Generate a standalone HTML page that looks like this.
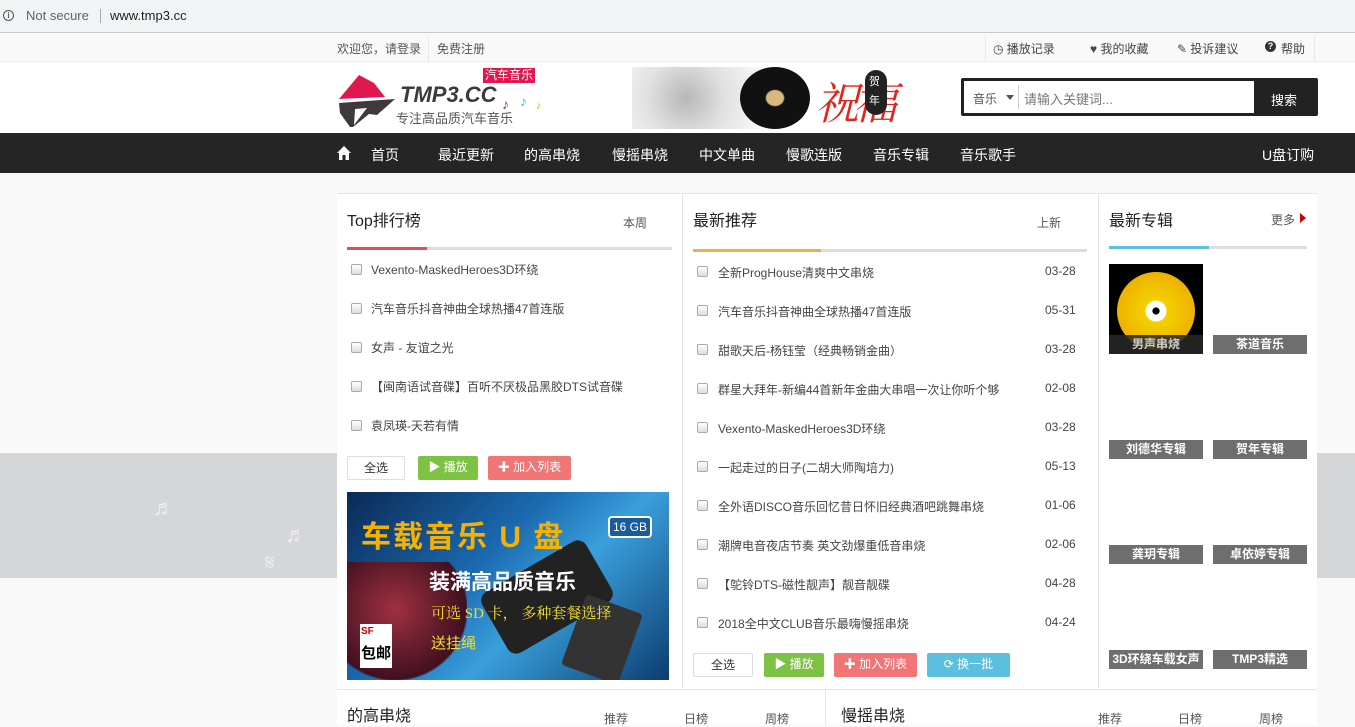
<!DOCTYPE html>
<html><head><meta charset="utf-8"><style>
*{margin:0;padding:0;box-sizing:border-box}
body{width:1355px;height:725px;overflow:hidden;background:#f9f9f9;font-family:"Liberation Sans","Noto Sans CJK SC",sans-serif;font-size:12px;color:#333;position:relative}
.a{position:absolute}
.t{white-space:nowrap}
.cb{position:absolute;width:11px;height:11px;border:1px solid #aaa;border-radius:2px;background:linear-gradient(#fff,#ddd)}
.li{position:absolute;font-size:12px;color:#444;white-space:nowrap}
.btn{position:absolute;height:24px;line-height:22px;font-size:12px;text-align:center;border-radius:2px;color:#fff}
.lab{position:absolute;width:94px;height:19px;background:#6e6e6e;color:#fff;font-size:12px;text-align:center;line-height:19px;font-weight:bold;overflow:hidden;white-space:nowrap}
.nav span{position:absolute;top:145px;color:#fff;font-size:14px}
</style></head><body>
<!-- browser bar -->
<div class="a" style="left:0;top:0;width:1355px;height:33px;background:#f1f3f4;border-bottom:1px solid #c7c7c7"></div>
<div class="a" style="left:3px;top:10px;width:11px;height:11px;border:1.3px solid #555;border-radius:50%;font-size:8px;line-height:9px;text-align:center;font-weight:bold;color:#555">i</div>
<div class="a t" style="left:26px;top:8px;font-size:13px;color:#5f6368">Not secure</div>
<div class="a" style="left:100px;top:9px;width:1px;height:14px;background:#aaa"></div>
<div class="a t" style="left:110px;top:8px;font-size:13px;color:#222">www.tmp3.cc</div>
<!-- top links -->
<div class="a" style="left:0;top:34px;width:1355px;height:28px;background:#f9f9f9;border-bottom:1px solid #eee"></div>
<div class="a t" style="left:337px;top:40px;font-size:12px;color:#555">欢迎您，请登录</div>
<div class="a" style="left:428px;top:36px;width:1px;height:25px;background:#e8e8e8"></div>
<div class="a" style="left:985px;top:35px;width:330px;height:26px;border-left:1px solid #e8e8e8;border-right:1px solid #e8e8e8"></div>
<div class="a t" style="left:437px;top:40px;font-size:12px;color:#555">免费注册</div>
<div class="a t" style="left:993px;top:40px;color:#444">◷ 播放记录</div>
<div class="a t" style="left:1090px;top:40px;color:#444">♥ 我的收藏</div>
<div class="a t" style="left:1177px;top:40px;color:#444">✎ 投诉建议</div>
<div class="a" style="left:1265px;top:41px;width:11px;height:11px;border-radius:50%;background:#333;color:#fff;font-size:9px;line-height:11px;text-align:center;font-weight:bold">?</div>
<div class="a t" style="left:1281px;top:40px;color:#444">帮助</div>
<!-- header -->
<div class="a" style="left:0;top:63px;width:1355px;height:70px;background:#fff"></div>
<svg class="a" style="left:337px;top:73px" width="62" height="55" viewBox="0 0 62 55"><path d="M22 2 L37 10 L48 24 L2 26 Z" fill="#e0184f"/><path d="M2 30 L58 26 L40 42 L32 41 L16 54 L13 54 L3 40 Z" fill="#3e3a3a"/><path d="M18 36 L30 35 L17 52 Z" fill="#fff"/></svg>
<div class="a t" style="left:400px;top:82px;font-size:22px;font-weight:bold;font-style:italic;color:#3e3a3a">TMP3.CC</div>
<div class="a t" style="left:396px;top:108px;font-size:13px;color:#555">专注高品质汽车音乐</div>
<div class="a t" style="left:483px;top:68px;font-size:12px;background:#e0184f;color:#fff;padding:0 2px;line-height:15px">汽车音乐</div>
<div class="a t" style="left:502px;top:96px;font-size:14px;color:#c3127f">♪</div>
<div class="a t" style="left:520px;top:93px;font-size:14px;color:#4ab3e8">♪</div>
<div class="a t" style="left:536px;top:100px;font-size:11px;color:#a7c800">♪</div>
<!-- banner -->
<div class="a" style="left:632px;top:67px;width:180px;height:62px;background:radial-gradient(circle at 30% 50%,#888 0,#ccc 30%,#fff 70%);opacity:.6"></div>
<div class="a" style="left:740px;top:67px;width:70px;height:62px;border-radius:50%;background:radial-gradient(#d8b880 0 17%,#111 20% 100%)"></div>
<div class="a t" style="left:815px;top:68px;font-size:44px;color:#e3241c;font-family:'Noto Serif CJK SC',serif;font-style:italic;letter-spacing:-6px">祝福</div>
<div class="a" style="left:865px;top:70px;width:22px;height:45px;border-radius:11px;background:#222"></div>
<div class="a" style="left:869px;top:73px;color:#fff;font-size:11px;line-height:19px;width:14px">贺年</div>
<!-- search -->
<div class="a" style="left:961px;top:78px;width:357px;height:38px;background:#222;border-radius:2px"></div>
<div class="a" style="left:964px;top:81px;width:290px;height:32px;background:#fff"></div>
<div class="a t" style="left:973px;top:90px;font-size:12px;color:#555">音乐</div>
<div class="a" style="left:1006px;top:95px;border:4px solid transparent;border-top:5px solid #555"></div>
<div class="a" style="left:1018px;top:85px;width:1px;height:24px;background:#ccc"></div>
<div class="a t" style="left:1024px;top:89px;font-size:13px;color:#777">请输入关键词...</div>
<div class="a t" style="left:1271px;top:90px;font-size:13px;color:#fff">搜索</div>
<!-- nav -->
<div class="a" style="left:0;top:133px;width:1355px;height:40px;background:#252525"></div>
<svg class="a" style="left:336px;top:145px" width="16" height="15" viewBox="0 0 16 15"><path d="M8 1 L1 8 L3 8 L3 15 L6.5 15 L6.5 10 L9.5 10 L9.5 15 L13 15 L13 8 L15 8 Z" fill="#fff"/></svg>
<div class="nav"><span style="left:371px">首页</span><span style="left:438px">最近更新</span><span style="left:524px">的高串烧</span><span style="left:612px">慢摇串烧</span><span style="left:699px">中文单曲</span><span style="left:786px">慢歌连版</span><span style="left:873px">音乐专辑</span><span style="left:960px">音乐歌手</span><span style="left:1262px">U盘订购</span></div>
<!-- band -->
<div class="a" style="left:0;top:453px;width:1355px;height:125px;background:#d5d6d8"></div>
<div class="a t" style="left:153px;top:495px;font-size:22px;color:#eee">♬</div>
<div class="a t" style="left:285px;top:522px;font-size:22px;color:#eee">♬</div>
<div class="a t" style="left:265px;top:550px;font-size:22px;color:#eee">𝄋</div>
<!-- container -->
<div class="a" style="left:337px;top:193px;width:980px;height:532px;background:#fff;border-top:1px solid #e5e5e5"></div>
<div class="a" style="left:682px;top:194px;width:1px;height:494px;background:#e5e5e5"></div>
<div class="a" style="left:1098px;top:194px;width:1px;height:494px;background:#e5e5e5"></div>
<div class="a" style="left:337px;top:689px;width:980px;height:1px;background:#e5e5e5"></div>
<div class="a" style="left:825px;top:690px;width:1px;height:35px;background:#e5e5e5"></div>
<!-- left column -->
<div class="a t" style="left:347px;top:207px;font-size:16px;color:#222">Top排行榜</div>
<div class="a t" style="left:623px;top:214px;font-size:12px;color:#555">本周</div>
<div class="a" style="left:347px;top:247px;width:325px;height:3px;background:#ddd"></div>
<div class="a" style="left:347px;top:247px;width:80px;height:3px;background:#d9534f"></div>
<div class="cb" style="left:351px;top:264px"></div><div class="li" style="left:371px;top:261px">Vexento-MaskedHeroes3D环绕</div>
<div class="cb" style="left:351px;top:303px"></div><div class="li" style="left:371px;top:300px">汽车音乐抖音神曲全球热播47首连版</div>
<div class="cb" style="left:351px;top:342px"></div><div class="li" style="left:371px;top:339px">女声 - 友谊之光</div>
<div class="cb" style="left:351px;top:381px"></div><div class="li" style="left:371px;top:378px">【闽南语试音碟】百听不厌极品黑胶DTS试音碟</div>
<div class="cb" style="left:351px;top:420px"></div><div class="li" style="left:371px;top:417px">袁凤瑛-天若有情</div>
<div class="btn" style="left:347px;top:456px;width:58px;border:1px solid #ddd;color:#333;background:#fff">全选</div>
<div class="btn" style="left:418px;top:456px;width:60px;background:#7dc242">▶ 播放</div>
<div class="btn" style="left:488px;top:456px;width:83px;background:#f07575">✚ 加入列表</div>
<!-- ad -->
<div class="a" style="left:347px;top:492px;width:322px;height:188px;background:linear-gradient(135deg,#0a2a55 0%,#1b6ab0 40%,#3aa0dc 60%,#0d3c70 100%);overflow:hidden">
<div class="a" style="left:0;top:70px;width:120px;height:118px;background:radial-gradient(ellipse at 40% 40%,#a03040,#401020 70%,transparent 72%)"></div>
<div class="a" style="left:140px;top:70px;width:120px;height:70px;background:#222;transform:rotate(-30deg);border-radius:10px"></div>
<div class="a" style="left:225px;top:110px;width:60px;height:75px;background:#333;transform:rotate(20deg);border-radius:4px"></div>
<div class="a t" style="left:14px;top:20px;font-size:30px;font-weight:bold;color:#f5b000;letter-spacing:2px">车载音乐 U 盘</div>
<div class="a t" style="left:261px;top:24px;font-size:12px;color:#fff;border:2px solid #fff;border-radius:4px;padding:2px 3px;background:#1a5c9a">16 GB</div>
<div class="a t" style="left:82px;top:74px;font-size:21px;font-weight:bold;color:#fff">装满高品质音乐</div>
<div class="a t" style="left:84px;top:110px;font-size:15px;color:#f0e030;font-family:'Liberation Serif','Noto Serif CJK SC',serif">可选 SD 卡，  多种套餐选择</div>
<div class="a t" style="left:84px;top:140px;font-size:15px;color:#f0e030">送挂绳</div>
<div class="a" style="left:13px;top:132px;width:32px;height:44px;background:#fff"></div>
<div class="a t" style="left:14px;top:134px;font-size:10px;font-weight:bold;color:#c00">SF</div>
<div class="a t" style="left:14px;top:150px;font-size:15px;font-weight:bold;color:#000">包邮</div>
</div>
<!-- middle column -->
<div class="a t" style="left:693px;top:207px;font-size:16px;color:#222">最新推荐</div>
<div class="a t" style="left:1037px;top:214px;font-size:12px;color:#555">上新</div>
<div class="a" style="left:693px;top:249px;width:394px;height:3px;background:#ddd"></div>
<div class="a" style="left:693px;top:249px;width:128px;height:3px;background:#f0ad4e"></div>
<div class="cb" style="left:697px;top:266px"></div><div class="li" style="left:718px;top:264px">全新ProgHouse清爽中文串烧</div><div class="li" style="left:1045px;top:264px">03-28</div>
<div class="cb" style="left:697px;top:305px"></div><div class="li" style="left:718px;top:303px">汽车音乐抖音神曲全球热播47首连版</div><div class="li" style="left:1045px;top:303px">05-31</div>
<div class="cb" style="left:697px;top:344px"></div><div class="li" style="left:718px;top:342px">甜歌天后-杨钰莹（经典畅销金曲）</div><div class="li" style="left:1045px;top:342px">03-28</div>
<div class="cb" style="left:697px;top:383px"></div><div class="li" style="left:718px;top:381px">群星大拜年-新编44首新年金曲大串唱一次让你听个够</div><div class="li" style="left:1045px;top:381px">02-08</div>
<div class="cb" style="left:697px;top:422px"></div><div class="li" style="left:718px;top:420px">Vexento-MaskedHeroes3D环绕</div><div class="li" style="left:1045px;top:420px">03-28</div>
<div class="cb" style="left:697px;top:461px"></div><div class="li" style="left:718px;top:459px">一起走过的日子(二胡大师陶培力)</div><div class="li" style="left:1045px;top:459px">05-13</div>
<div class="cb" style="left:697px;top:500px"></div><div class="li" style="left:718px;top:498px">全外语DISCO音乐回忆昔日怀旧经典酒吧跳舞串烧</div><div class="li" style="left:1045px;top:498px">01-06</div>
<div class="cb" style="left:697px;top:539px"></div><div class="li" style="left:718px;top:537px">潮牌电音夜店节奏 英文劲爆重低音串烧</div><div class="li" style="left:1045px;top:537px">02-06</div>
<div class="cb" style="left:697px;top:578px"></div><div class="li" style="left:718px;top:576px">【鸵铃DTS-磁性靓声】靓音靓碟</div><div class="li" style="left:1045px;top:576px">04-28</div>
<div class="cb" style="left:697px;top:617px"></div><div class="li" style="left:718px;top:615px">2018全中文CLUB音乐最嗨慢摇串烧</div><div class="li" style="left:1045px;top:615px">04-24</div>
<div class="btn" style="left:693px;top:653px;width:60px;border:1px solid #ddd;color:#333;background:#fff">全选</div>
<div class="btn" style="left:764px;top:653px;width:60px;background:#7dc242">▶ 播放</div>
<div class="btn" style="left:834px;top:653px;width:83px;background:#f07575">✚ 加入列表</div>
<div class="btn" style="left:927px;top:653px;width:83px;background:#5bc0de">⟳ 换一批</div>
<!-- right column -->
<div class="a t" style="left:1109px;top:207px;font-size:16px;color:#222">最新专辑</div>
<div class="a t" style="left:1271px;top:211px;font-size:12px;color:#555">更多</div>
<div class="a" style="left:1300px;top:213px;border:5px solid transparent;border-left:6px solid #c00;border-right:0"></div>
<div class="a" style="left:1109px;top:246px;width:198px;height:3px;background:#ddd"></div>
<div class="a" style="left:1109px;top:246px;width:100px;height:3px;background:#5bc0de"></div>
<div class="a" style="left:1109px;top:264px;width:94px;height:90px;background:#000;overflow:hidden"><div class="a" style="left:8px;top:8px;width:78px;height:78px;border-radius:50%;background:radial-gradient(#000 0 6%,#fff 7% 18%,#f5d000 20%,#e8a000 100%)"></div></div>
<div class="lab" style="left:1109px;top:335px;background:rgba(40,40,40,.85);color:#ccc">男声串烧</div>
<div class="lab" style="left:1213px;top:335px">茶道音乐</div>
<div class="lab" style="left:1109px;top:440px">刘德华专辑</div>
<div class="lab" style="left:1213px;top:440px">贺年专辑</div>
<div class="lab" style="left:1109px;top:545px">龚玥专辑</div>
<div class="lab" style="left:1213px;top:545px">卓依婷专辑</div>
<div class="lab" style="left:1109px;top:650px">3D环绕车载女声</div>
<div class="lab" style="left:1213px;top:650px">TMP3精选</div>
<!-- bottom -->
<div class="a t" style="left:347px;top:702px;font-size:16px;color:#222">的高串烧</div>
<div class="a t" style="left:604px;top:710px;color:#555">推荐</div>
<div class="a t" style="left:684px;top:710px;color:#555">日榜</div>
<div class="a t" style="left:765px;top:710px;color:#555">周榜</div>
<div class="a t" style="left:841px;top:702px;font-size:16px;color:#222">慢摇串烧</div>
<div class="a t" style="left:1098px;top:710px;color:#555">推荐</div>
<div class="a t" style="left:1178px;top:710px;color:#555">日榜</div>
<div class="a t" style="left:1259px;top:710px;color:#555">周榜</div>
</body></html>
